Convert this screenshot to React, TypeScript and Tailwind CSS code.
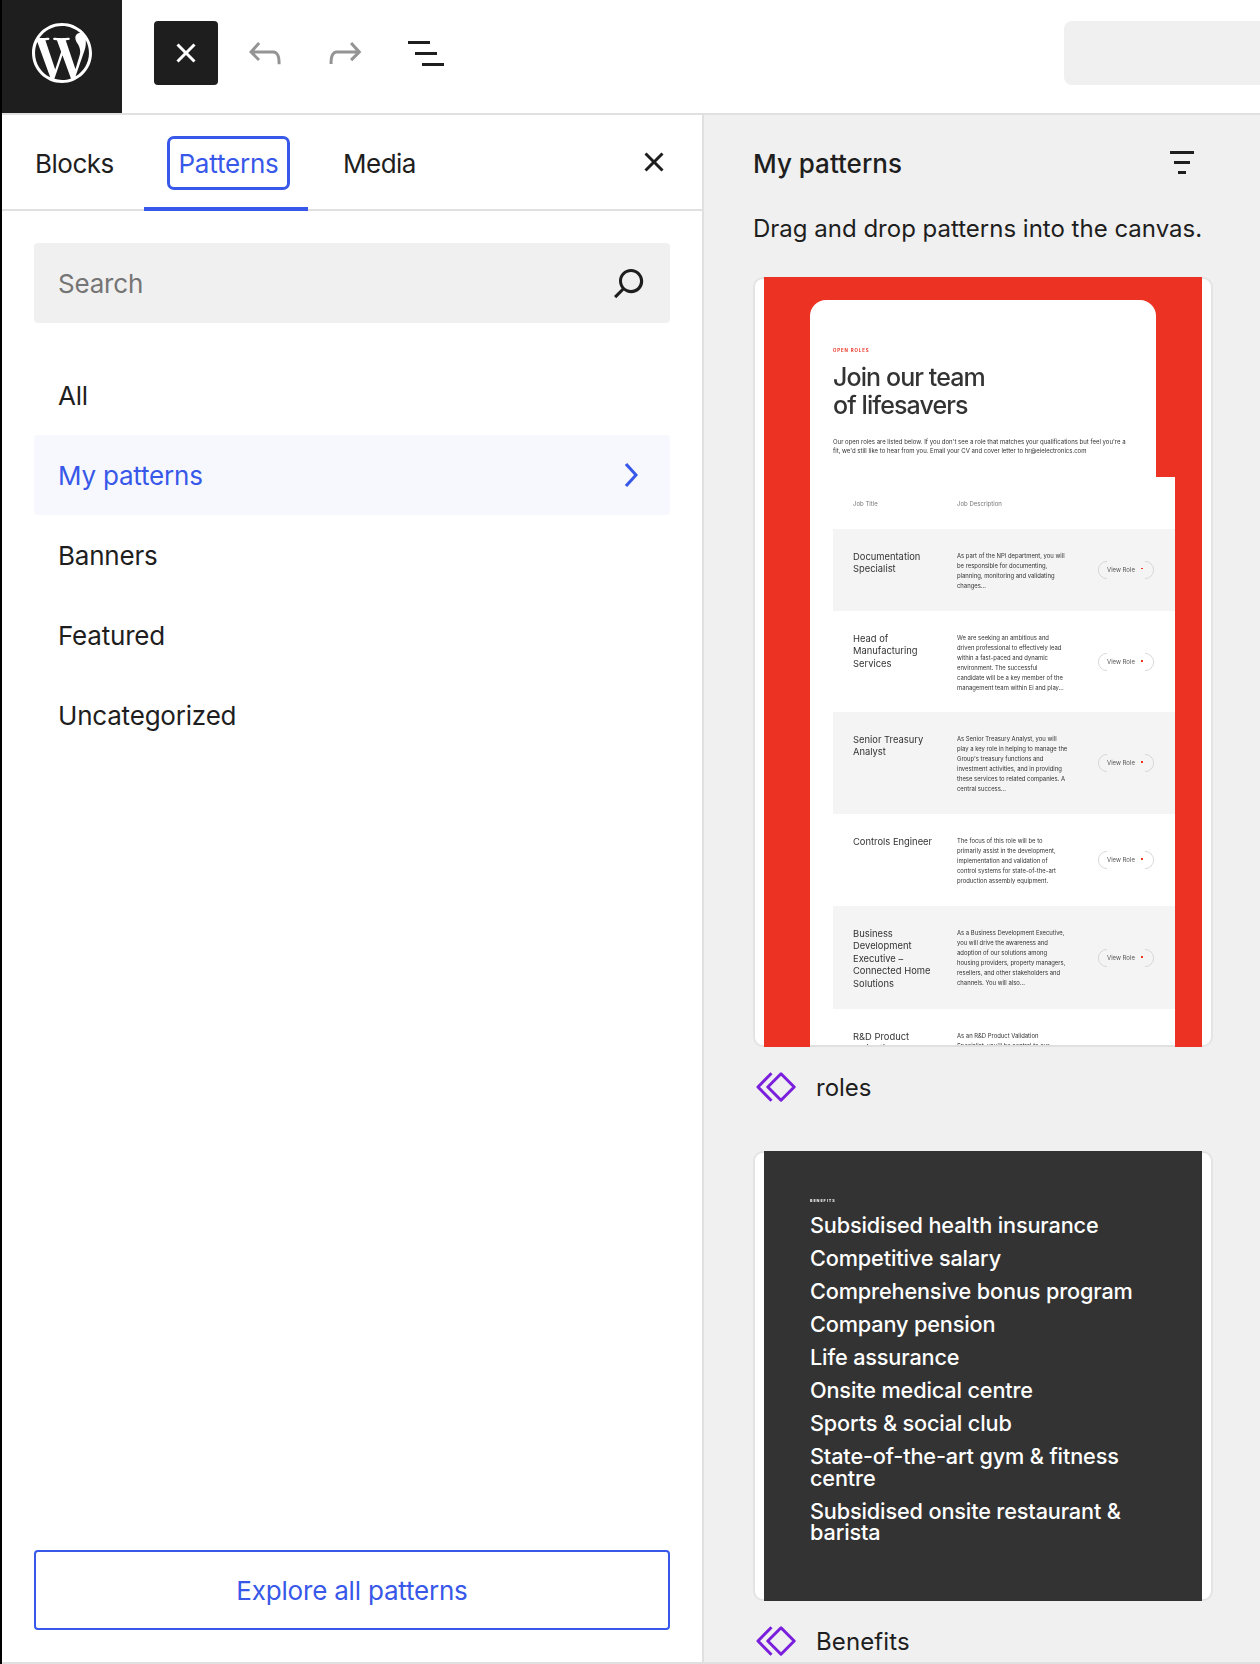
import React from "react";
import { SiWordpress } from "react-icons/si";

const Ico = ({ d, className }: { d: string; className: string }) => (
  <svg viewBox="0 0 24 24" className={className} fill="currentColor" aria-hidden="true">
    <path d={d} />
  </svg>
);

const CLOSE_SMALL = "M12 13.06l3.712 3.713 1.061-1.06L13.061 12l3.712-3.712-1.06-1.06L12 10.938 8.288 7.227l-1.061 1.06L10.939 12l-3.712 3.712 1.06 1.061L12 13.061z";
const UNDO = "M18.3 11.7c-.6-.6-1.4-.9-2.3-.9H6.7l2.9-3.3-1.1-1-4.5 5L8.5 16l1-1-2.7-2.7H16c.5 0 .9.2 1.3.5 1 1 1 3.4 1 4.5v.3h1.5v-.2c0-1.5 0-4.3-1.5-5.7z";
const REDO = "M15.6 6.5l-1.1 1 2.9 3.3H8c-.9 0-1.7.3-2.3.9-1.4 1.5-1.4 4.2-1.4 5.6v.2h1.5v-.3c0-1.1 0-3.5 1-4.5.3-.3.7-.5 1.3-.5h9.2L14.5 15l1.1 1.1 4.6-4.6-4.6-5z";
const LIST = "M3 6h11v1.5H3V6Zm3.5 5.5h11V13h-11v-1.5ZM21 17H10v1.5h11V17Z";
const SEARCH = "M13 5c-3.3 0-6 2.7-6 6 0 1.4.5 2.7 1.3 3.7l-3.8 3.8 1.1 1.1 3.8-3.8c1 .8 2.3 1.3 3.7 1.3 3.3 0 6-2.7 6-6S16.3 5 13 5zm0 10.5c-2.5 0-4.5-2-4.5-4.5s2-4.5 4.5-4.5 4.5 2 4.5 4.5-2 4.5-4.5 4.5z";
const CHEVRON = "M10.6 6L9.4 7l4.6 5-4.6 5 1.2 1 5.4-6z";
const FUNNEL = "M10 17.5H14V16H10V17.5ZM6 6V7.5H18V6H6ZM8 12.5H16V11H8V12.5Z";

const PatternIcon = () => (
  <svg viewBox="0 0 40 30" className="w-[40px] h-[30px] shrink-0" fill="none" stroke="#7a1fdc" strokeWidth="3" strokeLinejoin="round" aria-hidden="true">
    <path d="M25 1.8 L38.2 15 L25 28.2 L11.8 15 Z" />
    <path d="M15.5 1.2 L2 15 L15.5 28.8" />
  </svg>
);

const ViewRole = ({ dash }: { dash: "dot" | "line" | "double" }) => (
  <div className="relative w-[56px] h-[18px] shrink-0 text-[6px] leading-[18px] text-[#555] pl-[9px] whitespace-nowrap">
    <svg viewBox="0 0 56 18" className="absolute inset-0 w-[56px] h-[18px]" fill="none" stroke="#cfcfcf" strokeWidth="0.8" aria-hidden="true">
      <path d="M9 .4 A8.6 8.6 0 0 0 9 17.6" />
      <path d="M47 .4 A8.6 8.6 0 0 1 47 17.6" />
    </svg>
    View Role
    {dash === "dot" && <span className="absolute left-[43px] top-[7px] w-[2px] h-[2px] bg-[#ec3323]" />}
    {dash === "line" && <span className="absolute left-[43px] top-[7px] w-[2px] h-px bg-[#ec3323]" />}
    {dash === "double" && (
      <span className="absolute left-[43px] top-[7px] w-[2px] h-[2px] border-y-[0.6px] border-[#ec3323]" />
    )}
  </div>
);

const rows = [
  { h: "h-[82px]", bg: "bg-[#f4f4f4]", title: ["Documentation", "Specialist"], desc: ["As part of the NPI department, you will", "be responsible for documenting,", "planning, monitoring and validating", "changes..."], dash: "line" as const },
  { h: "h-[101px]", bg: "bg-white", title: ["Head of", "Manufacturing", "Services"], desc: ["We are seeking an ambitious and", "driven professional to effectively lead", "within a fast-paced and dynamic", "environment. The successful", "candidate will be a key member of the", "management team within Ei and play..."], dash: "dot" as const },
  { h: "h-[102px]", bg: "bg-[#f4f4f4]", title: ["Senior Treasury", "Analyst"], desc: ["As Senior Treasury Analyst, you will", "play a key role in helping to manage the", "Group's treasury functions and", "investment activities, and in providing", "these services to related companies. A", "central success..."], dash: "double" as const },
  { h: "h-[92px]", bg: "bg-white", title: ["Controls Engineer"], desc: ["The focus of this role will be to", "primarily assist in the development,", "implementation and validation of", "control systems for state-of-the-art", "production assembly equipment."], dash: "dot" as const },
  { h: "h-[103px]", bg: "bg-[#f4f4f4]", title: ["Business", "Development", "Executive –", "Connected Home", "Solutions"], desc: ["As a Business Development Executive,", "you will drive the awareness and", "adoption of our solutions among", "housing providers, property managers,", "resellers, and other stakeholders and", "channels. You will also..."], dash: "dot" as const },
];

const Lines = ({ items }: { items: string[] }) => (
  <>
    {items.map((l) => (
      <div key={l} className="whitespace-nowrap">{l}</div>
    ))}
  </>
);

const benefits = [
  ["Subsidised health insurance"],
  ["Competitive salary"],
  ["Comprehensive bonus program"],
  ["Company pension"],
  ["Life assurance"],
  ["Onsite medical centre"],
  ["Sports & social club"],
  ["State-of-the-art gym & fitness", "centre"],
  ["Subsidised onsite restaurant &", "barista"],
];

const cats = ["Banners", "Featured", "Uncategorized"];

export default function App() {
  return (
    <div className="w-[1260px] h-[1664px] overflow-hidden flex bg-white text-[#1e1e1e] text-[26px] tracking-[-0.2px] font-['Inter',sans-serif]">
      <div className="w-[2px] bg-black shrink-0" />
      <div className="flex-1 min-w-0 flex flex-col border-b-2 border-[#e0e0e0]">
        {/* Top bar */}
        <header className="h-[115px] shrink-0 flex border-b-2 border-[#e0e0e0]">
          <div className="w-[120px] bg-[#1e1e1e] flex items-center justify-center text-white pb-[7px]">
            <SiWordpress className="w-[60px] h-[60px]" />
          </div>
          <div className="flex items-center flex-1 pl-[32px] pb-[7px]">
            <div className="w-[64px] h-[64px] rounded-[4px] bg-[#1e1e1e] text-white flex items-center justify-center">
              <Ico d={CLOSE_SMALL} className="w-[48px] h-[48px]" />
            </div>
            <Ico d={UNDO} className="w-[48px] h-[48px] ml-[23px] text-[#949494]" />
            <Ico d={REDO} className="w-[48px] h-[48px] ml-[32px] text-[#949494]" />
            <Ico d={LIST} className="w-[48px] h-[48px] ml-[33px] text-[#1e1e1e]" />
            <div className="ml-auto w-[196px] h-[64px] rounded-l-[8px] bg-[#f0f0f0]" />
          </div>
        </header>
        <div className="flex-1 min-h-0 flex">
          {/* Inserter */}
          <aside className="w-[702px] shrink-0 flex flex-col border-r-2 border-[#e0e0e0]">
            <div className="h-[96px] shrink-0 flex items-stretch border-b-2 border-[#e0e0e0]">
              <div className="w-[142px] pl-[33px] pt-[2px] flex items-center tracking-[-0.5px]">Blocks</div>
              <div className="w-[164px] flex items-center pl-[23px] text-[#3858e9] -mb-[2px] border-b-4 border-[#3858e9]">
                <span className="w-[123px] h-[54px] mt-[4px] border-[3px] border-[#3858e9] rounded-[7px] flex items-center justify-center">Patterns</span>
              </div>
              <div className="pl-[35px] pt-[2px] flex items-center tracking-[-0.5px]">Media</div>
              <Ico d={CLOSE_SMALL} className="w-[48px] h-[48px] ml-auto mr-[24px] self-center" />
            </div>
            <div className="flex-1 flex flex-col px-[32px] pt-[32px] pb-[32px]">
              <div className="h-[80px] rounded-[4px] bg-[#f0f0f0] pl-[24px] pr-[17px] flex items-center justify-between text-[#757575]">
                <span>Search</span>
                <Ico d={SEARCH} className="w-[48px] h-[48px] text-[#1e1e1e]" />
              </div>
              <div className="mt-[32px] h-[80px] pl-[24px] flex items-center">All</div>
              <div className="h-[80px] pl-[24px] pr-[16px] rounded-[4px] bg-[#f7f8fe] text-[#3858e9] flex items-center justify-between">
                <span>My patterns</span>
                <Ico d={CHEVRON} className="w-[48px] h-[48px]" />
              </div>
              {cats.map((c) => (
                <div key={c} className="h-[80px] pl-[24px] flex items-center">{c}</div>
              ))}
              <div className="mt-auto h-[80px] rounded-[4px] border-2 border-[#3858e9] text-[#3858e9] flex items-center justify-center">
                Explore all patterns
              </div>
            </div>
          </aside>
          {/* Pattern list */}
          <main className="flex-1 min-w-0 bg-[#f0f0f0] overflow-hidden pl-[49px]">
            <div className="w-[460px] flex items-center justify-between h-[72px] pr-[7px] pt-[24px]">
              <span className="font-medium tracking-normal">My patterns</span>
              <Ico d={FUNNEL} className="w-[48px] h-[48px]" />
            </div>
            <p className="mt-[24px] text-[24px] tracking-normal leading-[36px] whitespace-nowrap">Drag and drop patterns into the canvas.</p>
            <div className="mt-[30px] w-[460px] h-[770px] rounded-[10px] border-2 border-[#e4e4e4] bg-white px-[9px]">
              <div className="h-[770px] -mt-[2px] bg-[#ec3323] overflow-hidden pt-[23px] pl-[46px] text-[#333] tracking-normal blur-[0.3px]">
                <div className="w-[346px] h-[177px] bg-white rounded-t-[16px] pl-[23px] pt-[48px]">
                  <div className="text-[4.4px] leading-[5px] font-bold tracking-[0.9px] uppercase text-[#ec3323]">Open roles</div>
                  <div className="mt-[10px] text-[25px] leading-[28px] font-medium tracking-[-0.9px] whitespace-nowrap">Join our team<br />of lifesavers</div>
                  <div className="mt-[18px] text-[6px] leading-[9px] whitespace-nowrap">
                    Our open roles are listed below. If you don't see a role that matches your qualifications but feel you're a<br />
                    fit, we'd still like to hear from you. Email your CV and cover letter to hr@eielectronics.com
                  </div>
                </div>
                <div className="w-[365px] h-[570px] bg-white pl-[23px] overflow-hidden border-b-2 border-[#e0e0e0]">
                  <div className="h-[52px] flex items-center text-[6px] text-[#777] pt-[1px]">
                    <span className="ml-[20px] w-[104px]">Job Title</span>
                    <span>Job Description</span>
                  </div>
                  {rows.map((r) => (
                    <div key={r.title[0]} className={`${r.h} ${r.bg} flex`}>
                      <div className="ml-[20px] w-[104px] pt-[22px] text-[9.4px] leading-[12.4px] shrink-0">
                        <Lines items={r.title} />
                      </div>
                      <div className="w-[141px] pt-[22px] text-[5.9px] leading-[10px] shrink-0">
                        <Lines items={r.desc} />
                      </div>
                      <div className="flex items-center">
                        <ViewRole dash={r.dash} />
                      </div>
                    </div>
                  ))}
                  <div className="flex">
                    <div className="ml-[20px] w-[104px] pt-[22px] text-[9.4px] leading-[12.4px] shrink-0">
                      <Lines items={["R&D Product", "Validation"]} />
                    </div>
                    <div className="w-[141px] pt-[22px] text-[5.9px] leading-[10px] shrink-0">
                      <Lines items={["As an R&D Product Validation", "Specialist, you'll be central to our"]} />
                    </div>
                  </div>
                </div>
              </div>
            </div>
            <div className="h-[80px] mb-[24px] flex items-center pl-[3px] gap-[20px]">
              <PatternIcon />
              <span className="text-[24px] tracking-normal pt-[2px]">roles</span>
            </div>
            <div className="w-[460px] h-[450px] rounded-[10px] border-2 border-[#e4e4e4] bg-white px-[9px]">
              <div className="h-[450px] -mt-[2px] bg-[#333] pt-[48px] pl-[46px] text-white tracking-normal">
                <div className="text-[3.8px] leading-[4px] font-bold tracking-[0.9px] uppercase blur-[0.2px]">Benefits</div>
                <div className="mt-[12px] text-[21.7px] leading-[21.7px] whitespace-nowrap font-medium tracking-[-0.15px]">
                  {benefits.map((b) => (
                    <div key={b[0]} className="mb-[11.3px]">
                      <Lines items={b} />
                    </div>
                  ))}
                </div>
              </div>
            </div>
            <div className="h-[80px] flex items-center pl-[3px] gap-[20px]">
              <PatternIcon />
              <span className="text-[24px] tracking-[0.1px] pt-[2px]">Benefits</span>
            </div>
          </main>
        </div>
      </div>
    </div>
  );
}
